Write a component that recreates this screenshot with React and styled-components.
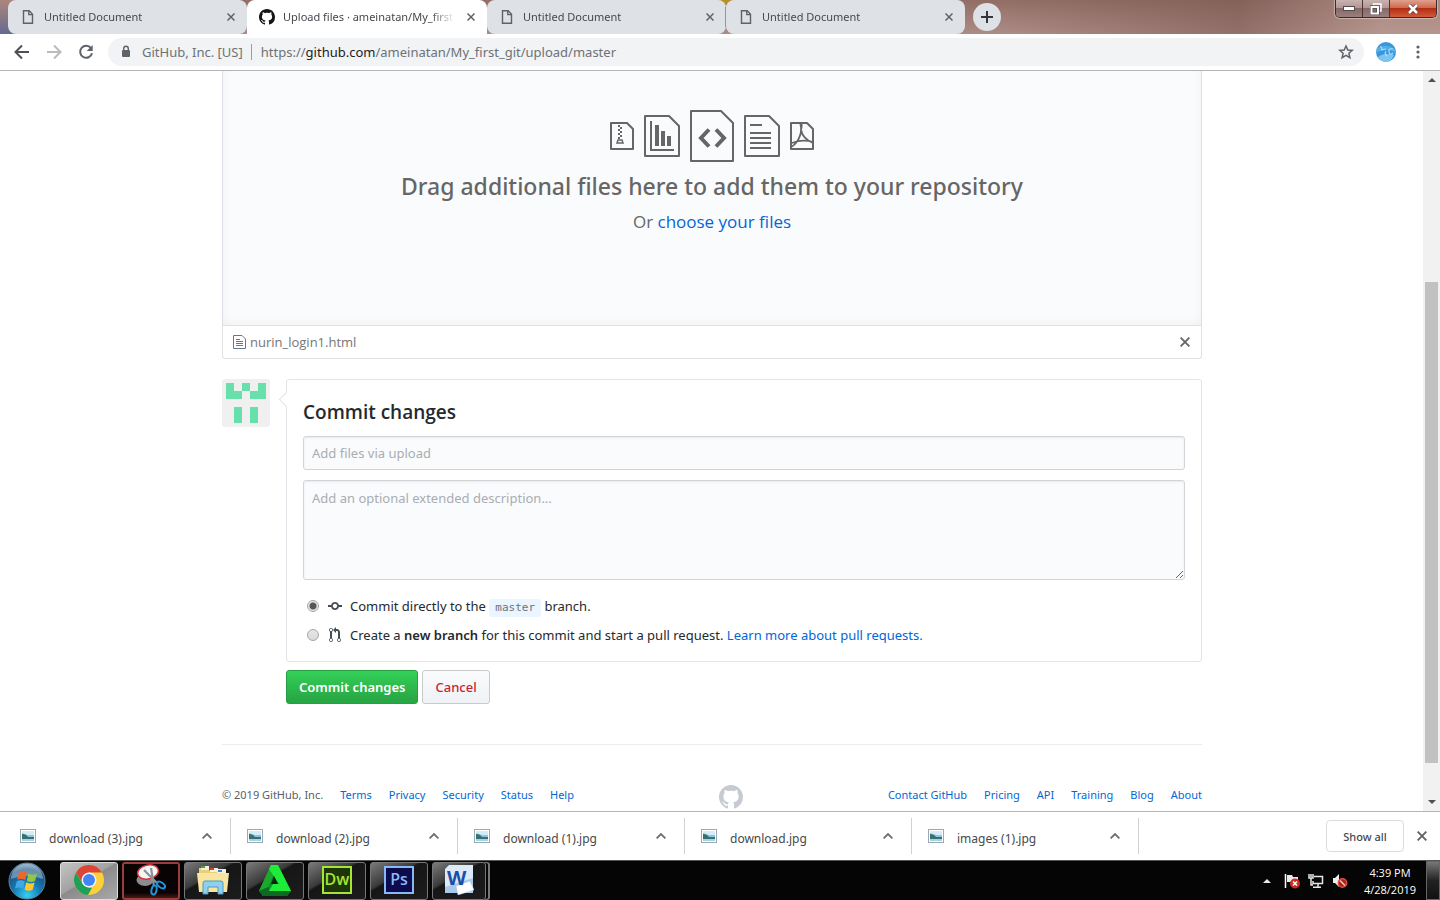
import React from "react";
import styled, { createGlobalStyle, css } from "styled-components";

const wideFont = `"Noto Sans", "Open Sans", sans-serif`;

const GlobalStyle = createGlobalStyle`
  * { box-sizing: border-box; }
  html, body { margin: 0; }
  body {
    font-family: "Open Sans", "Noto Sans", sans-serif;
    font-size: 13px;
    line-height: 20px;
    color: #24292e;
    background: #fff;
    overflow: hidden;
  }
  button, input, textarea { font-family: inherit; }
  a { color: #0366d6; text-decoration: none; }
  svg { display: block; flex: none; }
`;

const Screen = styled.div`
  display: flex;
  flex-direction: column;
  height: 100vh;
`;

const IconButton = styled.button`
  display: flex;
  align-items: center;
  justify-content: center;
  flex: none;
  width: ${(p) => p.$size || 16}px;
  height: ${(p) => p.$size || 16}px;
  padding: 0;
  border: 0;
  border-radius: 50%;
  background: ${(p) => p.$bg || "transparent"};
`;

/* ---------- Browser frame ---------- */

const TabStrip = styled.div`
  display: flex;
  align-items: flex-start;
  flex: none;
  height: 34px;
  padding-left: 8px;
  background:
    radial-gradient(circle at 726px 0, #b58f2c 0, #b58f2c 8px, transparent 9px),
    linear-gradient(180deg, rgba(190, 150, 140, 0.6), rgba(70, 90, 150, 0.7)) 0 0 / 16px 34px no-repeat,
    linear-gradient(90deg, transparent 70%, rgba(120, 84, 78, 0.5) 86%, rgba(190, 160, 150, 0.5) 96%),
    linear-gradient(180deg, #926d66, #ad8c86);
`;

const Tab = styled.div`
  display: flex;
  align-items: center;
  flex: none;
  width: ${(p) => (p.$wide ? 240 : 239)}px;
  height: 34px;
  padding: 0 8px 0 ${(p) => (p.$active ? 12 : 14)}px;
  gap: ${(p) => (p.$active ? 8 : 10)}px;
  border-radius: ${(p) => (p.$active ? "8px 8px 0 0" : "8px")};
  background: ${(p) => (p.$active ? "#fff" : "#dee1e6")};
`;

const TabDivider = styled.span`
  width: 1px;
  height: 20px;
  margin: 0 -8px 0 -3px;
  background: #94979b;
`;

const TabTitle = styled.span`
  flex: 1;
  min-width: 0;
  white-space: nowrap;
  font-family: ${wideFont};
  font-size: 11px;
  line-height: 16px;
  color: #45494d;
  mask-image: linear-gradient(90deg, #000 calc(100% - 24px), transparent);
`;

const NewTab = styled(IconButton)`
  margin: 3px 0 0 8px;
`;

const WindowControls = styled.div`
  display: flex;
  height: 18px;
  margin: 0 3px 0 auto;
  border: 1px solid #3c2a2a;
  border-top: 0;
  border-radius: 0 0 5px 5px;
  overflow: hidden;
  box-shadow: 0 0 1px 1px rgba(255, 255, 255, 0.4);
`;

const WindowButton = styled.button`
  display: flex;
  align-items: center;
  justify-content: center;
  width: ${(p) => (p.$close ? 46 : 27)}px;
  padding: 0;
  border: 0;
  border-right: ${(p) => (p.$close ? 0 : "1px solid #4b3534")};
  background: ${(p) =>
    p.$close
      ? "linear-gradient(#e0a08f 0, #cf6a50 45%, #b32f14 50%, #d3593a)"
      : "linear-gradient(#c9b3b0 0, #b39894 45%, #86686a 50%, #9b7f7c)"};
`;

const Toolbar = styled.div`
  display: flex;
  align-items: center;
  flex: none;
  height: 37px;
  padding: 0 14px;
  background: #fff;
  border-bottom: 1px solid #b6b4b6;
`;

const NavButtons = styled.div`
  display: flex;
  gap: 16px;
`;

const Omnibox = styled.div`
  display: flex;
  align-items: center;
  flex: 1;
  height: 28px;
  margin: 0 12px 0 14px;
  padding: 0 10px;
  border-radius: 14px;
  background: #f1f3f4;
  font-family: ${wideFont};
  font-size: 13px;
  color: #6d7277;
`;

const SiteName = styled.span`
  margin-left: 8px;
  padding-right: 8px;
  border-right: 1px solid #9a9da1;
  line-height: 16px;
`;

const Url = styled.span`
  flex: 1;
  padding-left: 9px;
  b { font-weight: 400; color: #202124; }
`;

const Avatar = styled.span`
  margin-right: 14px;
`;

/* ---------- Page ---------- */

const Viewport = styled.div`
  display: flex;
  flex: 1;
  min-height: 0;
`;

const Page = styled.div`
  flex: 1;
  min-width: 0;
  padding-left: 1px;
  overflow: hidden;
`;

const Scrollbar = styled.div`
  display: flex;
  flex-direction: column;
  align-items: center;
  flex: none;
  width: 17px;
  padding: 7px 0;
  background: #f1f1f1;
`;

const ScrollThumb = styled.div`
  width: 13px;
  flex: 480;
  background: #c1c1c1;
`;

const ScrollSpace = styled.div`
  flex: ${(p) => p.$grow};
`;

const Container = styled.main`
  max-width: 980px;
  margin: 0 auto;
`;

const DropZone = styled.section`
  display: flex;
  flex-direction: column;
  align-items: center;
  padding: 39px 0 91px;
  border: 1px solid #dfe2e8;
  border-top: 0;
  background: #fafbfc;
  box-shadow: inset 0 -8px 8px -4px rgba(27, 31, 35, 0.03), inset 8px 0 8px -6px rgba(27, 31, 35, 0.03),
    inset -8px 0 8px -6px rgba(27, 31, 35, 0.03);
  color: #666;
`;

const FileIcons = styled.div`
  display: flex;
  align-items: center;
  gap: 10px;
`;

const DropTitle = styled.h2`
  margin: 8px 0;
  font-family: ${wideFont};
  font-size: 23px;
  font-weight: 500;
  line-height: 32px;
`;

const DropHint = styled.p`
  margin: 0;
  font-size: 17px;
  line-height: 24px;
`;

const FileRow = styled.div`
  display: flex;
  align-items: center;
  gap: 4px;
  height: 33px;
  padding: 0 8px 0 10px;
  border: 1px solid #dfe2e5;
  border-top: 0;
  border-radius: 0 0 3px 3px;
  color: #767676;
  span { flex: 1; }
`;

const CommitArea = styled.div`
  display: flex;
  align-items: flex-start;
  gap: 16px;
  margin-top: 20px;
`;

const CommitForm = styled.form`
  flex: 1;
  min-width: 0;
`;

const CommitBox = styled.div`
  position: relative;
  padding: 16px;
  border: 1px solid #e1e4e8;
  border-radius: 3px;
  &::before {
    content: "";
    position: absolute;
    top: 14px;
    left: -6px;
    width: 10px;
    height: 10px;
    border: solid #e1e4e8;
    border-width: 0 0 1px 1px;
    background: #fff;
    transform: rotate(45deg);
  }
`;

const CommitTitle = styled.h3`
  margin: 0 0 8px;
  font-size: 19px;
  font-weight: 600;
  line-height: 32px;
`;

const field = css`
  display: block;
  width: 100%;
  padding: 6px 8px;
  border: 1px solid #d1d5da;
  border-radius: 3px;
  background: #fafbfc;
  box-shadow: inset 0 1px 2px rgba(27, 31, 35, 0.075);
  font-family: ${wideFont};
  font-size: 13px;
  line-height: 20px;
  outline: none;
  &::placeholder { color: #a9adb2; }
`;

const SummaryInput = styled.input`
  ${field}
  height: 34px;
`;

const DescriptionInput = styled.textarea`
  ${field}
  height: 100px;
  margin: 10px 0 16px;
  padding-top: 7px;
  resize: vertical;
`;

const Choice = styled.label`
  display: flex;
  align-items: center;
  height: 20px;
  margin-bottom: ${(p) => (p.$last ? 0 : 9)}px;
  padding-left: 4px;
  font-family: ${wideFont};
  svg { margin: 0 8px 0 9px; }
  strong { font-weight: 600; }
`;

const Radio = styled.input.attrs({ type: "radio" })`
  appearance: none;
  flex: none;
  width: 12px;
  height: 12px;
  margin: 0;
  border: 1px solid #a6a6a6;
  border-radius: 50%;
  background: linear-gradient(#e6e6e6, #dadada);
  &:checked { background: radial-gradient(circle, #555 0, #555 3px, #e4e4e4 4px); }
`;

const BranchName = styled.code`
  display: inline-block;
  padding: 0 6px;
  border-radius: 3px;
  background: #eaf5ff;
  font-family: "DejaVu Sans Mono", "Liberation Mono", monospace;
  font-size: 11px;
  line-height: 18px;
  color: #6a737d;
`;

const Actions = styled.div`
  display: flex;
  gap: 4px;
  margin-top: 8px;
`;

const Button = styled.button`
  height: 34px;
  padding: 0 12px;
  border: 1px solid ${(p) => (p.$primary ? "#269f42" : "#c8cacc")};
  border-radius: 3px;
  background: ${(p) => (p.$primary ? "linear-gradient(#34d058, #28a745 90%)" : "linear-gradient(#fafbfc, #eff3f6 90%)")};
  color: ${(p) => (p.$primary ? "#fff" : "#cb2431")};
  font-family: ${wideFont};
  font-size: 13px;
  font-weight: ${(p) => (p.$primary ? 600 : 500)};
  line-height: 20px;
`;

const Footer = styled.footer`
  display: flex;
  justify-content: space-between;
  margin-top: 40px;
  padding-top: 40px;
  border-top: 1px solid #eaecef;
  font-family: ${wideFont};
  font-size: 11px;
  color: #586069;
`;

const FooterLinks = styled.nav`
  display: flex;
  gap: 17px;
`;

/* ---------- Download shelf ---------- */

const Shelf = styled.div`
  display: flex;
  align-items: center;
  flex: none;
  height: 49px;
  padding: 0 10px 0 4px;
  border-top: 1px solid #b6b4b6;
  background: #fff;
  color: #45494d;
`;

const DownloadItem = styled.div`
  display: flex;
  align-items: center;
  width: 227px;
  height: 36px;
  padding: 0 17px 0 16px;
  border-right: 1px solid #d0d1d3;
  font-family: ${wideFont};
  font-size: 12px;
  span { flex: 1; padding: 6px 0 0 13px; }
`;

const ShowAll = styled.button`
  width: 78px;
  height: 32px;
  margin: 0 10px 0 auto;
  padding: 0;
  border: 1px solid #dadce0;
  border-radius: 4px;
  background: #fff;
  color: #45494d;
  font-family: ${wideFont};
  font-size: 11px;
  font-weight: 500;
`;

/* ---------- Taskbar ---------- */

const Taskbar = styled.div`
  display: flex;
  align-items: center;
  flex: none;
  gap: 4px;
  height: 40px;
  padding-left: 8px;
  border-top: 1px solid #555;
  background: #050505;
`;

const StartButton = styled(IconButton)`
  margin-right: 10px;
`;

const appTones = {
  plain: css`
    border-color: #777;
    background: linear-gradient(150deg, #7a7a7a 0, #3a3a3a 38%, #161616 42%, #1c1c1c);
  `,
  active: css`
    border-color: #ddd;
    background: linear-gradient(150deg, #c4c4c4 0, #a2a2a2 45%, #8b8b8b 48%, #a9a9a9);
  `,
  alert: css`
    border-color: #9b3d3d;
    border-width: 2px;
    background: linear-gradient(#0a0304 85%, #4f1717);
  `,
};

const AppButton = styled.button`
  display: flex;
  align-items: center;
  justify-content: center;
  flex: none;
  width: 58px;
  height: 38px;
  padding: 0 0 2px;
  border: 1px solid;
  border-radius: 3px;
  ${(p) => appTones[p.$tone || "plain"]}
  ${(p) => p.$stacked && css`
    width: 54px;
    box-shadow: 3px 0 0 -1px #050505, 4px 0 0 0 #777;
  `}
`;

const AdobeTile = styled.span`
  width: 30px;
  height: 28px;
  border: 2px solid ${(p) => p.$edge};
  background: ${(p) => p.$fill};
  color: ${(p) => p.$edge};
  font-size: 16px;
  font-weight: 600;
  line-height: 22px;
`;

const Tray = styled.div`
  display: flex;
  align-items: center;
  gap: 8px;
  margin-left: auto;
  color: #fff;
`;

const TrayMore = styled(IconButton)`
  margin-right: 1px;
`;

const Clock = styled.time`
  width: 64px;
  margin-left: 2px;
  text-align: center;
  font-size: 11px;
  line-height: 17px;
`;

const ShowDesktop = styled.button`
  width: 14px;
  height: 39px;
  margin-left: -4px;
  padding: 0;
  border: 1px solid #666;
  background: linear-gradient(#777, #222 50%, #111);
`;

/* ---------- Drawings ---------- */

const PageGlyph = () => (
  <svg width="12" height="14" viewBox="0 0 12 14" fill="none" stroke="#5f6368" strokeWidth="1.4">
    <path d="M1.5.8h5.700l3.300 3.400v9H1.500z" />
    <path d="M6.800 1v3.600h3.500" />
  </svg>
);

const Cross = ({ size = 8, color = "#5f6368" }) => (
  <svg width={size} height={size} viewBox="0 0 8 8" stroke={color} strokeWidth="1.5">
    <path d="M.5.5l7 7M7.5.5l-7 7" />
  </svg>
);

const GitHubMark = ({ size, color }) => (
  <svg width={size} height={size} viewBox="0 0 16 16" fill={color}>
    <path d="M8 0C3.58 0 0 3.58 0 8c0 3.54 2.29 6.53 5.47 7.59.4.07.55-.17.55-.38 0-.19-.01-.82-.01-1.49-2.01.37-2.53-.49-2.69-.94-.09-.23-.48-.94-.82-1.13-.28-.15-.68-.52-.01-.53.63-.01 1.08.58 1.23.82.72 1.21 1.87.87 2.33.66.07-.52.28-.87.51-1.07-1.78-.2-3.64-.89-3.64-3.95 0-.87.31-1.59.82-2.15-.08-.2-.36-1.02.08-2.12 0 0 .67-.21 2.2.82.64-.18 1.32-.27 2-.27.68 0 1.36.09 2 .27 1.53-1.04 2.2-.82 2.2-.82.44 1.1.16 1.92.08 2.12.51.56.82 1.27.82 2.15 0 3.07-1.87 3.75-3.65 3.95.29.25.54.73.54 1.48 0 1.07-.01 1.93-.01 2.2 0 .21.15.46.55.38A8.01 8.01 0 0 0 16 8c0-4.42-3.58-8-8-8z" />
  </svg>
);

const Arrow = ({ flip, color }) => (
  <svg width="16" height="16" viewBox="0 0 16 16" fill="none" stroke={color} strokeWidth="2">
    <path d={flip ? "M1 8h13M8 1.5L14.5 8 8 14.5" : "M15 8H2M8 1.5L1.5 8 8 14.5"} />
  </svg>
);

const Reload = () => (
  <svg width="16" height="16" viewBox="0 0 16 16" fill="none" stroke="#5f6368" strokeWidth="2">
    <path d="M13 4.2A6 6 0 1 0 14 9.2" />
    <path d="M14.7 1v6h-6z" fill="#5f6368" stroke="none" />
  </svg>
);

const Lock = () => (
  <svg width="16" height="16" viewBox="0 0 16 16">
    <rect x="4" y="6" width="8" height="7" rx="1" fill="#5f6368" />
    <path d="M5.700 7V4.500a2.300 2.300 0 0 1 4.600 0V7" fill="none" stroke="#5f6368" strokeWidth="1.400" />
  </svg>
);

const Star = () => (
  <svg width="16" height="16" viewBox="0 0 16 16" fill="none" stroke="#5f6368" strokeWidth="1.5">
    <path d="M8 2l1.8 4 4.4.4-3.3 2.9 1 4.3L8 11.300l-3.900 2.300 1-4.300L1.800 6.400 6.200 6z" />
  </svg>
);

const ProfilePicture = () => (
  <svg width="20" height="20" viewBox="0 0 20 20">
    <circle cx="10" cy="10" r="10" fill="#3796dc" />
    <path d="M1 6Q10 1 19 7l1 4Q10 5 0 11z" fill="#55ade6" />
    <path d="M2 15q6-5 16-2-3 7-8 7t-8-5z" fill="#7cc5f0" />
    <path d="M4 5q2-1 2 3M5 8l5-1M10 9q-2 3 1 5M17 7q-5-1-4 3t4 1" fill="none" stroke="#b5dff7" strokeWidth="1.100" />
  </svg>
);

const Dots = () => (
  <svg width="4" height="14" viewBox="0 0 4 14" fill="#5f6368">
    <circle cx="2" cy="2" r="1.6" />
    <circle cx="2" cy="7" r="1.6" />
    <circle cx="2" cy="12" r="1.6" />
  </svg>
);

const ScrollArrow = ({ down }) => (
  <svg width="8" height="4" viewBox="0 0 8 4" fill="#505050">
    <path d={down ? "M0 0h8L4 4z" : "M0 4h8L4 0z"} />
  </svg>
);

const Sheet = ({ w, h, cut, children }) => (
  <svg width={w} height={h} viewBox={`0 0 ${w} ${h}`} fill="none" stroke="#666" strokeWidth="2">
    <path d={`M1 1H${w - cut}L${w - 1} ${cut}V${h - 1}H1z`} strokeLinejoin="round" />
    {children}
  </svg>
);

const TextFile = () => (
  <svg width="13" height="14" viewBox="0 0 13 14" fill="none" stroke="#68778a" strokeWidth="1">
    <path d="M.5.5h8.500l3.500 3.500v9.500H.5zM3 4.500h4M3 6.500h7M3 8.500h7M3 10.500h7" />
  </svg>
);

const Identicon = () => (
  <svg width="48" height="48" viewBox="0 0 48 48">
    <rect width="48" height="48" rx="3" fill="#f0f0f0" />
    <path fill="#68e0ab" d="M4 4h8v8h8V4h8v8h8V4h8v16H28v-8h-8v8H4zM12 28h8v16h-8zM28 28h8v16h-8z" />
  </svg>
);

const CommitGlyph = () => (
  <svg width="14" height="16" viewBox="0 0 14 16" fill="#444d56">
    <path fillRule="evenodd" d="M10.860 7c-.45-1.720-2-3-3.860-3-1.860 0-3.410 1.280-3.860 3H0v2h3.140c.45 1.720 2 3 3.860 3 1.860 0 3.410-1.280 3.860-3H14V7h-3.140zM7 10.200c-1.220 0-2.200-.98-2.200-2.200 0-1.220.98-2.200 2.200-2.200 1.220 0 2.200.98 2.200 2.200 0 1.220-.98 2.200-2.200 2.200z" />
  </svg>
);

const PullGlyph = () => (
  <svg width="14" height="16" viewBox="-1 0 14 16" fill="#444d56">
    <path fillRule="evenodd" d="M11 11.280V5c-.03-.78-.34-1.470-.94-2.060C9.460 2.350 8.780 2.030 8 2H7V0L4 3l3 3V4h1c.27.02.48.11.69.31.21.2.3.42.31.69v6.280A1.993 1.993 0 0 0 10 15a1.993 1.993 0 0 0 1-3.720zm-1 2.920c-.66 0-1.200-.55-1.200-1.200 0-.65.55-1.200 1.200-1.200.65 0 1.200.55 1.200 1.200 0 .65-.55 1.200-1.200 1.200zM4 3c0-1.110-.89-2-2-2a1.993 1.993 0 0 0-1 3.720v6.560A1.993 1.993 0 0 0 2 15a1.993 1.993 0 0 0 1-3.720V4.720c.59-.34 1-.98 1-1.720zm-.8 10c0 .66-.55 1.200-1.200 1.200-.65 0-1.200-.55-1.200-1.200 0-.65.55-1.200 1.200-1.200.65 0 1.200.55 1.200 1.200zM2 4.200C1.340 4.200.8 3.650.8 3c0-.65.55-1.200 1.200-1.200.65 0 1.200.55 1.200 1.200 0 .65-.55 1.200-1.200 1.200z" />
  </svg>
);

const PictureFile = () => (
  <svg width="16" height="14" viewBox="0 0 16 14">
    <rect x=".5" y=".5" width="15" height="13" fill="#fff" stroke="#98a9b8" />
    <rect x="2" y="2" width="12" height="10" fill="#8cc4e6" />
    <path d="M2 2h12v4L8 6 2 4z" fill="#d5ecf7" />
    <path d="M2 5q4 0 6 3h6v2H2z" fill="#39706a" />
    <path d="M2 10h12v2H2z" fill="#a5d4ea" />
  </svg>
);

const Chevron = () => (
  <svg width="10" height="6" viewBox="0 0 10 6" fill="none" stroke="#6b6f73" strokeWidth="1.800">
    <path d="M.6 5.400L5 1l4.400 4.400" />
  </svg>
);

const StartOrb = () => (
  <svg width="38" height="38" viewBox="0 0 38 38">
    <defs>
      <radialGradient id="orb" cx=".5" cy=".9" r=".9">
        <stop offset="0" stopColor="#35d0f4" />
        <stop offset=".45" stopColor="#1677b0" />
        <stop offset=".8" stopColor="#1d4f7e" />
        <stop offset="1" stopColor="#8fb0c6" />
      </radialGradient>
    </defs>
    <circle cx="19" cy="19" r="18" fill="url(#orb)" stroke="#5b86a1" />
    <path d="M3 17A16 15 0 0 1 35 17Q19 11 3 17z" fill="#c6dbe7" opacity=".45" />
    <path d="M11 10.500q4-2 8 .3l-1.800 7.200q-4-2.200-8-.2z" fill="#f0652b" />
    <path d="M20.500 11.500q4 2.200 8.500.3l-2 7.200q-4.200 2-8.200-.3z" fill="#92c83e" />
    <path d="M8.800 19.300q4-2 8 .3L15 26.800q-4-2.300-8-.3z" fill="#3fa9e8" />
    <path d="M18.300 20.300q4.200 2.200 8.300.3l-2 7.200q-4.200 2-8.100-.4z" fill="#fdc82f" />
  </svg>
);

const ChromeLogo = () => (
  <svg width="30" height="30" viewBox="0 0 30 30">
    <circle cx="15" cy="15" r="15" fill="#fdd03b" />
    <path d="M2 7.500A15 15 0 0 1 28 7.500H15L8.500 18.700z" fill="#db4437" />
    <path d="M2 7.500l6.500 11.300L15 22.500l3 .2-4 7.300A15 15 0 0 1 2 7.500z" fill="#1fa05a" />
    <circle cx="15" cy="15" r="7.500" fill="#f3f3f3" />
    <circle cx="15" cy="15" r="6" fill="#4285f4" />
  </svg>
);

const SnippingLogo = () => (
  <svg width="30" height="32" viewBox="0 0 30 32">
    <ellipse cx="9" cy="16" rx="8.500" ry="6" fill="#8c8c8c" />
    <ellipse cx="12" cy="8" rx="10.500" ry="7" fill="#f6f6f6" stroke="#d8303a" strokeWidth="1.500" transform="rotate(-12 12 8)" />
    <path d="M8 6l13 13M15 4l3 18" stroke="#87939b" strokeWidth="2.200" />
    <ellipse cx="18" cy="26" rx="2.500" ry="4.500" fill="none" stroke="#1f94d6" strokeWidth="2" transform="rotate(12 18 26)" />
    <ellipse cx="25" cy="21" rx="2.500" ry="4.500" fill="none" stroke="#1f94d6" strokeWidth="2" transform="rotate(-55 25 21)" />
  </svg>
);

const ExplorerLogo = () => (
  <svg width="34" height="32" viewBox="0 0 34 32">
    <path d="M3 4h9l2 3h16v20H3z" fill="#e9cf78" />
    <path d="M5 2h8v4H5zM14 4h8v4h-8zM21 5h9v4h-9z" fill="#f4f0dc" />
    <path d="M5 2h4v2H5z" fill="#3aa648" />
    <path d="M14 4h4v2h-4z" fill="#d3402c" />
    <path d="M22 6h4v2h-4z" fill="#3a7fc8" />
    <path d="M1 9h32l-2 19H3z" fill="#f7e5a0" />
    <path d="M7 30V19q0-2 2-2h16q2 0 2 2v11h-5v-7H12v7z" fill="#8fd0ee" stroke="#4d9cc4" />
  </svg>
);

const PrismLogo = () => (
  <svg width="32" height="32" viewBox="0 0 32 32">
    <path d="M12 1h7l13 26-4 5H4l-4-5z" fill="#12902a" />
    <path d="M12 1h7L9 23l-9 4z" fill="#1aa92c" />
    <path d="M12 1h7l13 26H10l4-7h6L10 5z" fill="#1eec38" />
    <path d="M15 12l4 8h-7z" fill="#0b2410" />
    <path d="M0 27l10-4v4h22l-4 5H4z" fill="#0c6a22" />
  </svg>
);

const WordLogo = () => (
  <svg width="30" height="30" viewBox="0 0 30 30">
    <path d="M1 4l4-4h24v28H1z" fill="#dbe9f8" />
    <path d="M1 22l28-9v15H1z" fill="#a9c9ec" />
    <path d="M12 21l14-5 4 9-16 5z" fill="#fff" stroke="#b5c5d8" strokeWidth=".500" />
    <text x="3" y="20" fontFamily="Open Sans, sans-serif" fontWeight="700" fontSize="20" fill="#1b4fa3">W</text>
  </svg>
);

const TrayArrow = () => (
  <svg width="8" height="4" viewBox="0 0 8 4" fill="#e8e8e8">
    <path d="M0 4h8L4 0z" />
  </svg>
);

const FlagGlyph = () => (
  <svg width="16" height="16" viewBox="0 0 16 16">
    <path d="M1.500 1v14" stroke="#fff" strokeWidth="1.500" />
    <path d="M3 2h5l1 2h5v6H9L8 9H3z" fill="#e9e9e9" />
    <circle cx="11" cy="10.500" r="5" fill="#d1281f" />
    <path d="M9 8.500l4 4M13 8.500l-4 4" stroke="#fff" strokeWidth="1.500" />
  </svg>
);

const NetworkGlyph = () => (
  <svg width="16" height="16" viewBox="0 0 16 16" fill="none" stroke="#e6e6e6" strokeWidth="1.500">
    <path d="M6 3.500h8.500v7H5V8M10 11v2.500M5 14.200h8M1 1v4h4V1M3 5v7h2M3 1v3" />
  </svg>
);

const SpeakerGlyph = () => (
  <svg width="16" height="16" viewBox="0 0 16 16">
    <path d="M1 5h2l4-4v13l-4-4H1z" fill="#eee" />
    <circle cx="10.500" cy="10" r="4.200" fill="#a7221c" stroke="#e8473e" strokeWidth="1.500" />
    <path d="M8 7.500l5 5" stroke="#f2c8c5" strokeWidth="1.500" />
  </svg>
);

/* ---------- Sections ---------- */

const tabs = [
  { title: "Untitled Document" },
  { title: "Upload files · ameinatan/My_first", active: true },
  { title: "Untitled Document", divided: true },
  { title: "Untitled Document" },
];

const downloads = ["download (3).jpg", "download (2).jpg", "download (1).jpg", "download.jpg", "images (1).jpg"];

const BrowserChrome = () => (
  <header>
    <TabStrip>
      {tabs.map((t, i) => (
        <Tab key={i} $active={t.active} $wide={t.active}>
          {t.active ? <GitHubMark size={16} color="#161514" /> : <PageGlyph />}
          <TabTitle>{t.title}</TabTitle>
          <IconButton aria-label="Close tab"><Cross /></IconButton>
          {t.divided && <TabDivider />}
        </Tab>
      ))}
      <NewTab $size={28} $bg="#dee1e6" aria-label="New tab">
        <svg width="12" height="12" viewBox="0 0 12 12" stroke="#33373b" strokeWidth="2">
          <path d="M6 0v12M0 6h12" />
        </svg>
      </NewTab>
      <WindowControls>
        <WindowButton aria-label="Minimize">
          <svg width="12" height="5" viewBox="0 0 12 5"><rect x=".5" y=".5" width="11" height="4" fill="#fff" stroke="#55494c" /></svg>
        </WindowButton>
        <WindowButton aria-label="Restore">
          <svg width="12" height="12" viewBox="0 0 12 12" fill="none">
            <path d="M3.500 3V1h7.500v7H9" stroke="#fff" strokeWidth="1.500" />
            <rect x="1.500" y="4" width="6.500" height="6.500" stroke="#55494c" strokeWidth="3.500" />
            <rect x="1.500" y="4" width="6.500" height="6.500" stroke="#fff" strokeWidth="2" />
          </svg>
        </WindowButton>
        <WindowButton $close aria-label="Close">
          <svg width="12" height="10" viewBox="0 0 12 10" fill="none">
            <path d="M2 1l8 8M10 1L2 9" stroke="#5c3b3a" strokeWidth="4" />
            <path d="M2 1l8 8M10 1L2 9" stroke="#fff" strokeWidth="2.500" />
          </svg>
        </WindowButton>
      </WindowControls>
    </TabStrip>
    <Toolbar>
      <NavButtons>
        <IconButton aria-label="Back"><Arrow color="#4d5156" /></IconButton>
        <IconButton aria-label="Forward"><Arrow flip color="#b9bbbe" /></IconButton>
        <IconButton aria-label="Reload"><Reload /></IconButton>
      </NavButtons>
      <Omnibox>
        <Lock />
        <SiteName>GitHub, Inc. [US]</SiteName>
        <Url>https://<b>github.com</b>/ameinatan/My_first_git/upload/master</Url>
        <IconButton aria-label="Bookmark"><Star /></IconButton>
      </Omnibox>
      <Avatar><ProfilePicture /></Avatar>
      <IconButton aria-label="Menu"><Dots /></IconButton>
    </Toolbar>
  </header>
);

const UploadPage = () => (
  <Page>
    <Container>
      <DropZone>
        <FileIcons>
          <Sheet w={24} h={28} cut={7}>
            <path d="M9 3v14" strokeDasharray="2 2" />
            <path d="M11 5v12" strokeDasharray="2 2" />
            <path d="M7 21l1-3h4l1 3z" strokeWidth="1.500" />
          </Sheet>
          <Sheet w={36} h={42} cut={11}>
            <path d="M7 6v29h23" />
            <path d="M13 10v21M19 16v15M25 21v10" strokeWidth="4" />
          </Sheet>
          <Sheet w={44} h={52} cut={13}>
            <path d="M19 19.500L11 28l8 8.500M26 19.500l8 8.500-8 8.500" strokeWidth="4" />
          </Sheet>
          <Sheet w={36} h={42} cut={11}>
            <path d="M6 10h12M6 18h21M6 23h21M6 28h21M6 33h21" />
          </Sheet>
          <Sheet w={24} h={28} cut={7}>
            <path d="M1 25C7 22 12 13 11 5q-1-4 0-4 1.500 1 0 7 2 9 12 13M2 21q10-4 21-1" strokeWidth="1.800" />
          </Sheet>
        </FileIcons>
        <DropTitle>Drag additional files here to add them to your repository</DropTitle>
        <DropHint>Or <a href="#choose">choose your files</a></DropHint>
      </DropZone>
      <FileRow>
        <TextFile />
        <span>nurin_login1.html</span>
        <IconButton aria-label="Remove file"><Cross size={10} color="#666" /></IconButton>
      </FileRow>

      <CommitArea>
        <Identicon />
        <CommitForm onSubmit={(e) => e.preventDefault()}>
          <CommitBox>
            <CommitTitle>Commit changes</CommitTitle>
            <SummaryInput aria-label="Commit message" placeholder="Add files via upload" />
            <DescriptionInput aria-label="Extended description" placeholder="Add an optional extended description..." />
            <Choice>
              <Radio name="target" defaultChecked />
              <CommitGlyph />
              <span>Commit directly to the <BranchName>master</BranchName> branch.</span>
            </Choice>
            <Choice $last>
              <Radio name="target" />
              <PullGlyph />
              <span>
                Create a <strong>new branch</strong> for this commit and start a pull request.{" "}
                <a href="#learn">Learn more about pull requests.</a>
              </span>
            </Choice>
          </CommitBox>
          <Actions>
            <Button $primary type="submit">Commit changes</Button>
            <Button type="button">Cancel</Button>
          </Actions>
        </CommitForm>
      </CommitArea>

      <Footer>
        <FooterLinks>
          <span>© 2019 GitHub, Inc.</span>
          {["Terms", "Privacy", "Security", "Status", "Help"].map((l) => <a key={l} href="#footer">{l}</a>)}
        </FooterLinks>
        <GitHubMark size={24} color="#c6cbd1" />
        <FooterLinks>
          {["Contact GitHub", "Pricing", "API", "Training", "Blog", "About"].map((l) => <a key={l} href="#footer">{l}</a>)}
        </FooterLinks>
      </Footer>
    </Container>
  </Page>
);

export default function App() {
  return (
    <Screen>
      <GlobalStyle />
      <BrowserChrome />
      <Viewport>
        <UploadPage />
        <Scrollbar>
          <ScrollArrow />
          <ScrollSpace $grow={200} />
          <ScrollThumb />
          <ScrollSpace $grow={37} />
          <ScrollArrow down />
        </Scrollbar>
      </Viewport>
      <Shelf>
        {downloads.map((name) => (
          <DownloadItem key={name}>
            <PictureFile />
            <span>{name}</span>
            <IconButton $size={12} aria-label="Download options"><Chevron /></IconButton>
          </DownloadItem>
        ))}
        <ShowAll>Show all</ShowAll>
        <IconButton aria-label="Close downloads bar"><Cross size={10} /></IconButton>
      </Shelf>
      <Taskbar>
        <StartButton $size={38} aria-label="Start"><StartOrb /></StartButton>
        <AppButton $tone="active" aria-label="Chrome"><ChromeLogo /></AppButton>
        <AppButton $tone="alert" aria-label="Snipping Tool"><SnippingLogo /></AppButton>
        <AppButton aria-label="Explorer"><ExplorerLogo /></AppButton>
        <AppButton aria-label="Prism"><PrismLogo /></AppButton>
        <AppButton aria-label="Dreamweaver"><AdobeTile $edge="#a4e635" $fill="#1d3508">Dw</AdobeTile></AppButton>
        <AppButton aria-label="Photoshop"><AdobeTile $edge="#8ab8f5" $fill="#0c0b4e">Ps</AdobeTile></AppButton>
        <AppButton $stacked aria-label="Word"><WordLogo /></AppButton>
        <Tray>
          <TrayMore $size={16} aria-label="Show hidden icons"><TrayArrow /></TrayMore>
          <FlagGlyph />
          <NetworkGlyph />
          <SpeakerGlyph />
          <Clock>4:39 PM<br />4/28/2019</Clock>
          <ShowDesktop aria-label="Show desktop" />
        </Tray>
      </Taskbar>
    </Screen>
  );
}
